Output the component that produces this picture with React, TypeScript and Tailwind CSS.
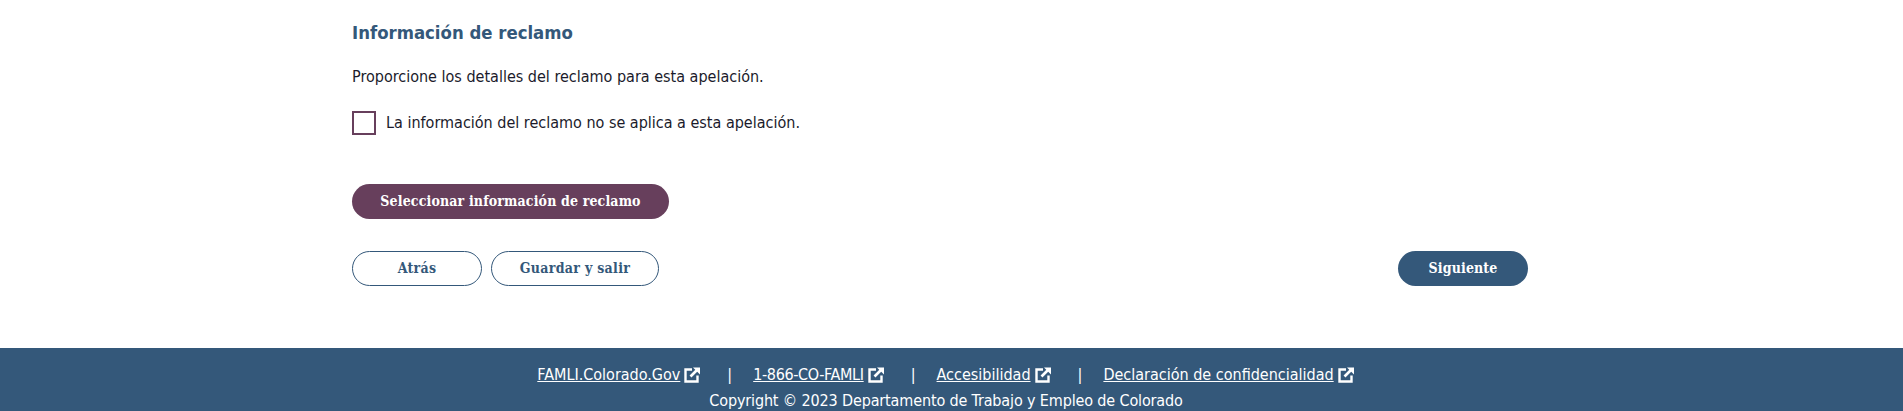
import React from 'react';

const bodyFont = 'font-["DejaVu_Sans_Condensed","DejaVu_Sans",sans-serif]';
const slabFont = 'font-["DejaVu_Serif_Condensed","DejaVu_Serif",serif]';

const ExternalIcon: React.FC = () => (
  <svg viewBox="0 0 18 18" className="ml-[3px] h-[18px] w-[18px]" fill="none" stroke="#fff">
    <path d="M9 3.5H2.5v12h12V9.5" strokeWidth="2.4" />
    <path d="M7.5 10.5L14.5 3.5" strokeWidth="2.6" />
    <path d="M10 1.5h7v7z" fill="#fff" stroke="none" />
  </svg>
);

const links = [
  { label: 'FAMLI.Colorado.Gov', className: 'underline' },
  { label: '1-866-CO-FAMLI', className: 'underline tracking-[-0.35px]' },
  { label: 'Accesibilidad', className: 'underline' },
  { label: 'Declaración de confidencialidad', className: 'underline' },
];

const App: React.FC = () => {
  return (
    <div className={`flex h-[411px] flex-col overflow-hidden bg-white text-[#1b1b2b] ${bodyFont}`}>
      <main className="ml-[352px] h-[348px] w-[1176px] shrink-0 pt-[21px]">
        <h2 className="text-[18.4px] leading-[24px] font-bold text-[#34587a]">Información de reclamo</h2>
        <p className="mt-[20px] text-[16px] leading-[24px]">Proporcione los detalles del reclamo para esta apelación.</p>
        <label className="mt-[22px] flex items-center gap-[10px] text-[16px] leading-[24px]">
          <span className="h-[24px] w-[24px] border-2 border-[#673f5c] bg-white" />
          <span className="-mt-[1px]">La información del reclamo no se aplica a esta apelación.</span>
        </label>
        <button className={`mt-[49px] block h-[35px] w-[317px] rounded-full bg-[#673f5c] text-[14px] font-bold tracking-[0.15px] text-white ${slabFont}`}>
          Seleccionar información de reclamo
        </button>
        <div className="mt-[32px] flex gap-[9px]">
          <button className={`h-[35px] w-[130px] rounded-full border border-[#34587a] text-[14px] font-bold tracking-[0.3px] text-[#34587a] ${slabFont}`}>Atrás</button>
          <button className={`h-[35px] w-[168px] rounded-full border border-[#34587a] text-[14px] font-bold tracking-[0.3px] text-[#34587a] ${slabFont}`}>Guardar y salir</button>
          <button className={`ml-auto h-[35px] w-[130px] rounded-full bg-[#34587a] text-[14px] font-bold tracking-[0.15px] text-white ${slabFont}`}>Siguiente</button>
        </div>
      </main>
      <footer className="h-[63px] shrink-0 bg-[#34587a] pt-[15px] pr-[11px] text-center text-[16px] leading-[24px] text-white">
        <div className="flex items-center justify-center">
          {links.map((l, i) => (
            <React.Fragment key={l.label}>
              {i > 0 && <span className="mr-[21px] ml-[26px]">|</span>}
              <a href="#" className={l.className}>{l.label}</a>
              <ExternalIcon />
            </React.Fragment>
          ))}
        </div>
        <div className="mt-[2px] tracking-[-0.14px]">Copyright © 2023 Departamento de Trabajo y Empleo de Colorado</div>
      </footer>
    </div>
  );
};

export default App;
